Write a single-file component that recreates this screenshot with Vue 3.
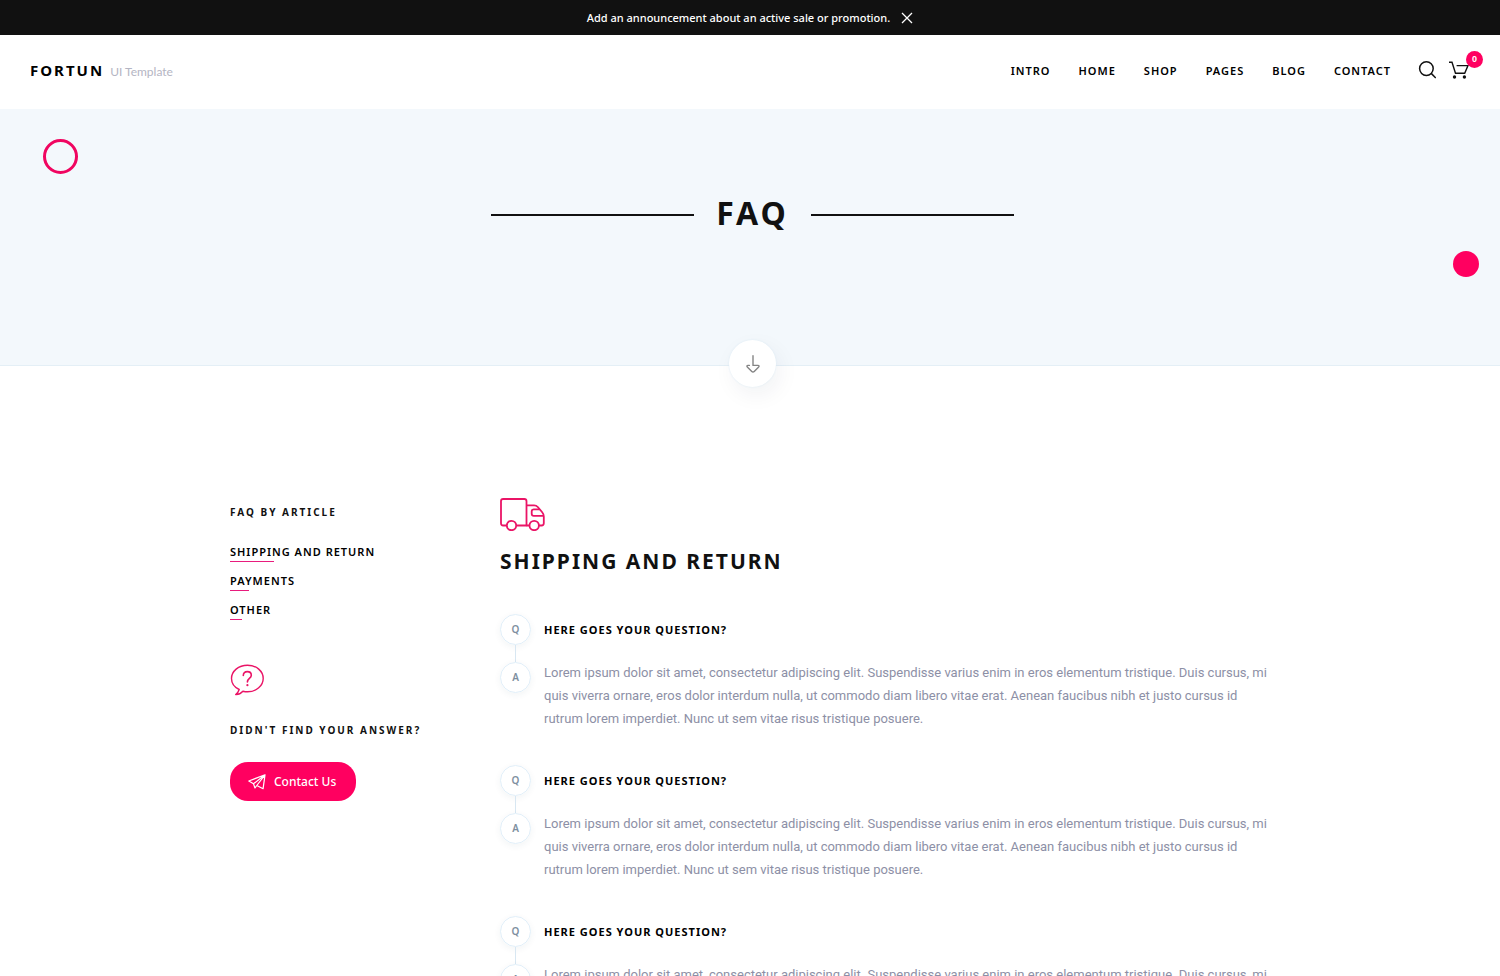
<script setup>
import { ref } from 'vue'

const announcementOpen = ref(true)
const navItems = ['Intro', 'Home', 'Shop', 'Pages', 'Blog', 'Contact']
const articles = [
  { id: 'shipping', label: 'Shipping and return' },
  { id: 'payments', label: 'Payments' },
  { id: 'other', label: 'Other' },
]
const answer =
  'Lorem ipsum dolor sit amet, consectetur adipiscing elit. Suspendisse varius enim in eros elementum tristique. Duis cursus, mi quis viverra ornare, eros dolor interdum nulla, ut commodo diam libero vitae erat. Aenean faucibus nibh et justo cursus id rutrum lorem imperdiet. Nunc ut sem vitae risus tristique posuere.'
const questions = [1, 2, 3].map((id) => ({ id, question: 'Here goes your question?', answer }))
</script>

<template>
  <div class="page">
    <div v-if="announcementOpen" class="announcement">
      <span>Add an announcement about an active sale or promotion.</span>
      <button type="button" class="plain" aria-label="Close announcement" @click="announcementOpen = false">
        <svg width="12" height="12" viewBox="0 0 12 12" fill="none" stroke="currentColor" stroke-width="1.3">
          <path d="M1 1l10 10M11 1L1 11" />
        </svg>
      </button>
    </div>

    <header class="header">
      <a href="#" class="brand">
        <span class="brand-name">FORTUN</span>
        <span class="brand-note">UI Template</span>
      </a>
      <nav class="nav">
        <a v-for="item in navItems" :key="item" href="#">{{ item }}</a>
      </nav>
      <button type="button" class="plain search" aria-label="Search">
        <svg width="18" height="18" viewBox="0 0 18 18" fill="none" stroke="currentColor" stroke-width="1.5">
          <circle cx="8.4" cy="7.6" r="6.8" />
          <path d="M13.200 12.400l4.600 4.600" />
        </svg>
      </button>
      <button type="button" class="plain cart" aria-label="Cart">
        <svg width="20" height="18" viewBox="0 0 20 18" fill="none" stroke="currentColor" stroke-width="1.4">
          <path d="M0 1.2h3l3.5 11h9.2L19 4.6H7.6" />
          <circle cx="5.5" cy="16" r="1.7" fill="currentColor" stroke="none" />
          <circle cx="15.4" cy="16" r="1.7" fill="currentColor" stroke="none" />
        </svg>
        <span class="badge">0</span>
      </button>
    </header>

    <section class="hero">
      <span class="ring"></span>
      <span class="dot"></span>
      <div class="hero-title">
        <span class="rule"></span>
        <h1>FAQ</h1>
        <span class="rule"></span>
      </div>
      <a href="#shipping" class="scroll-down" aria-label="Scroll to questions">
        <svg width="14" height="18" viewBox="0 0 14 18" fill="none" stroke="currentColor" stroke-width="1.4" stroke-linejoin="round" stroke-linecap="round">
          <path d="M7 .8v9.600h5c1 0 1.300.8.7 1.500l-4.500 4.500c-.7.7-1.700.7-2.400 0L1.300 11.900c-.7-.7-.3-1.500.7-1.500h1.400" />
        </svg>
      </a>
    </section>

    <main class="content">
      <aside class="sidebar">
        <h2 class="side-title">FAQ by article</h2>
        <ul class="articles">
          <li v-for="article in articles" :key="article.id">
            <a :href="'#' + article.id">{{ article.label }}</a>
          </li>
        </ul>
        <svg class="bubble" width="34" height="32" viewBox="0 0 34 32" fill="none" stroke="currentColor" stroke-width="1.4" stroke-linejoin="round" stroke-linecap="round">
          <path d="M9.200 25.500C4.500 23.300 1.500 19.200 1.500 14.500 1.500 7.200 8.500 1.200 17.500 1.200s15.700 6 15.700 13.200-6.800 13.400-15.700 13.400c-1.600 0-3.100-.2-4.600-.6-1.800 2-4 3.500-7.200 3.300 1.700-1.300 2.900-2.900 3.500-5z" />
          <path d="M13.300 11.500c0-2.400 1.600-3.900 4-3.900s4 1.500 4 3.600c0 3.200-3.900 3.200-3.900 6.700" stroke-width="1.6" />
          <circle cx="17.4" cy="21.2" r="1.1" fill="currentColor" stroke="none" />
        </svg>
        <h2 class="side-title">Didn't find your answer?</h2>
        <a href="#" class="contact">
          <svg width="18" height="16" viewBox="0 0 18 16" fill="none" stroke="currentColor" stroke-width="1.2" stroke-linejoin="round" stroke-linecap="round">
            <path d="M17 .8L.8 7l4.700 2.800L17 .8l-1.900 13.900-6.300-3.200L17 .8M5.500 9.800l1.500 4.200 1.800-2.500" />
          </svg>
          <span>Contact Us</span>
        </a>
      </aside>

      <section id="shipping" class="topic">
        <svg class="truck" width="45" height="33" viewBox="0 0 45 33" fill="none" stroke="currentColor" stroke-width="1.8" stroke-linejoin="round">
          <path d="M6.800 27.500H3.200C1.800 27.500 1 26.700 1 25.300V3.200C1 1.800 1.800 1 3.200 1h21.100c1.400 0 2.200.8 2.200 2.200v24.300H16.200" />
          <path d="M26.500 7.400h7.600c1.500 0 2.700.5 3.700 1.600l4.400 5.300c1.100 1.300 1.600 2.600 1.600 4.300v6.700c0 1.400-.8 2.200-2.200 2.200h-2.700M26.500 27.500h3" />
          <path d="M39.700 11.300h-5.900c-1.300 0-2.100.8-2.100 2.100v2.400c0 1.300.8 2.100 2.100 2.100h9.800" />
          <circle cx="11.500" cy="27.500" r="4.700" />
          <circle cx="34.200" cy="27.500" r="4.700" />
        </svg>
        <h2 class="topic-title">Shipping and return</h2>
        <article v-for="item in questions" :key="item.id" class="qa">
          <div class="markers">
            <span class="marker">Q</span>
            <span class="link-line"></span>
            <span class="marker">A</span>
          </div>
          <div class="qa-text">
            <h3>{{ item.question }}</h3>
            <p>{{ item.answer }}</p>
          </div>
        </article>
      </section>
    </main>
  </div>
</template>

<style>
body {
  background: #fff;
}
</style>

<style scoped>
.page {
  color: #111;
  font-family: 'Noto Sans', 'Open Sans', sans-serif;
}
a {
  color: inherit;
  text-decoration: none;
}
h1, h2, h3, p, ul {
  margin: 0;
  padding: 0;
}
svg {
  display: block;
}
.plain {
  padding: 0;
  border: 0;
  background: none;
  color: inherit;
  cursor: pointer;
}
.announcement {
  display: flex;
  align-items: center;
  justify-content: center;
  gap: 11px;
  height: 35px;
  background: #111;
  color: #fff;
  font-size: 11px;
  font-weight: 500;
  line-height: 16px;
}
.header {
  display: flex;
  align-items: center;
  height: 70px;
  padding: 0 31px 4px 30px;
}
.brand {
  display: flex;
  align-items: baseline;
  gap: 6px;
  margin-right: auto;
}
.brand-name {
  font-size: 15px;
  font-weight: 700;
  line-height: 24px;
  letter-spacing: 2px;
  color: #000;
}
.brand-note {
  font: 400 12px/16px Lato, sans-serif;
  color: #b4b5c3;
}
.nav {
  display: flex;
  gap: 28px;
  margin-right: 27px;
  padding-top: 2px;
  font-size: 11px;
  font-weight: 600;
  line-height: 18px;
  letter-spacing: 1px;
  color: #000;
  text-transform: uppercase;
}
.cart {
  position: relative;
  margin-left: 13px;
}
.badge {
  position: absolute;
  top: -10px;
  right: -14px;
  width: 17px;
  height: 17px;
  border-radius: 50%;
  background: #ff0060;
  color: #fff;
  font-size: 9px;
  font-weight: 700;
  line-height: 17px;
  text-align: center;
}
.hero {
  position: relative;
  display: flex;
  justify-content: center;
  height: 256px;
  padding-left: 5px;
  border-bottom: 1px solid #e4eff6;
  background: #f3f8fc;
}
.hero-title {
  display: flex;
  align-items: center;
  gap: 22px;
  height: 212px;
}
.hero-title h1 {
  padding-bottom: 4px;
  font-size: 32px;
  font-weight: 700;
  line-height: 40px;
  letter-spacing: 3px;
}
.rule {
  width: 203px;
  height: 2px;
  background: #111;
}
.ring {
  position: absolute;
  top: 30px;
  left: 43px;
  box-sizing: border-box;
  width: 35px;
  height: 35px;
  border: 3px solid #f00560;
  border-radius: 50%;
}
.dot {
  position: absolute;
  top: 142px;
  right: 21px;
  width: 26px;
  height: 26px;
  border-radius: 50%;
  background: #ff0060;
}
.scroll-down {
  position: absolute;
  bottom: -22px;
  display: flex;
  align-items: center;
  justify-content: center;
  width: 47px;
  height: 47px;
  border-radius: 50%;
  background: #fff;
  color: #858585;
  box-shadow: 0 0 2px #dbeaf4, 4px 8px 22px rgba(20, 40, 60, 0.06);
}
.content {
  display: grid;
  grid-template-columns: 270px 1fr;
  box-sizing: border-box;
  max-width: 1050px;
  margin: 0 auto;
  padding: 132px 0 60px 5px;
}
.sidebar {
  padding-top: 6px;
}
.side-title {
  font-size: 10px;
  font-weight: 700;
  line-height: 16px;
  letter-spacing: 2px;
  text-transform: uppercase;
}
.articles {
  display: grid;
  gap: 9px;
  justify-items: start;
  margin: 22px 0 44px;
  list-style: none;
  font-size: 11px;
  font-weight: 600;
  line-height: 19px;
  letter-spacing: 1px;
  color: #000;
  text-transform: uppercase;
}
.articles a {
  display: block;
}
.articles a::after {
  content: '';
  display: block;
  width: 30%;
  height: 1px;
  background: #e81c7d;
}
.bubble {
  margin-bottom: 26px;
  color: #ea1466;
}
.contact {
  display: inline-flex;
  align-items: center;
  gap: 8px;
  height: 39px;
  margin-top: 24px;
  padding: 0 20px 0 18px;
  border-radius: 18px;
  background: #ff0060;
  color: #fff;
  font-size: 12px;
  font-weight: 500;
  line-height: 20px;
}
.truck {
  color: #ea1466;
}
.topic-title {
  margin: 13px 0 36px;
  font-size: 21px;
  font-weight: 700;
  line-height: 34px;
  letter-spacing: 2px;
  text-transform: uppercase;
}
.qa {
  display: grid;
  grid-template-columns: 31px 1fr;
  column-gap: 13px;
  margin-bottom: 35px;
}
.markers {
  display: flex;
  flex-direction: column;
  align-items: center;
}
.marker {
  box-sizing: border-box;
  width: 31px;
  height: 31px;
  border: 1px solid #e1eff9;
  border-radius: 50%;
  color: #7e8fa0;
  font-size: 10px;
  font-weight: 600;
  line-height: 29px;
  text-align: center;
  box-shadow: 0 2px 7px rgba(30, 60, 90, 0.06);
}
.link-line {
  width: 1px;
  height: 17px;
  background: #d8e7f2;
}
.qa h3 {
  font-size: 11px;
  font-weight: 700;
  line-height: 32px;
  letter-spacing: 1px;
  color: #000;
  text-transform: uppercase;
}
.qa p {
  margin-top: 15px;
  color: #8d90a6;
  font: 400 13px/23px Roboto, sans-serif;
}
</style>
